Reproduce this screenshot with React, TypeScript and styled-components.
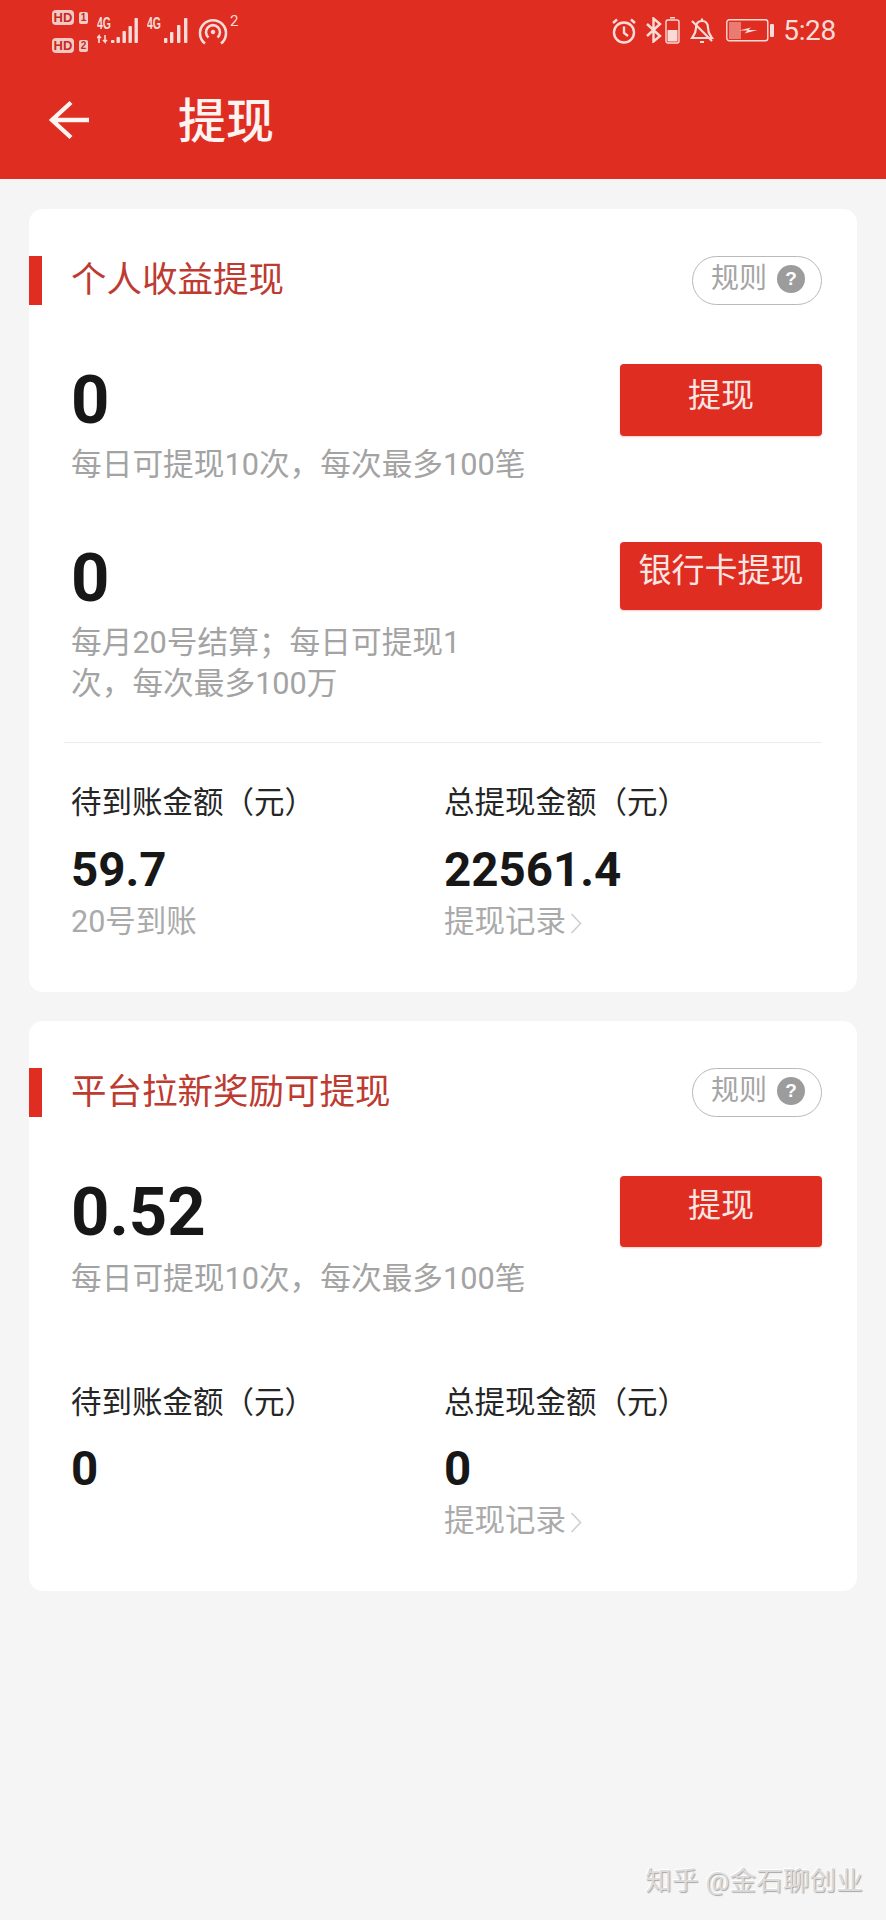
import React from "react";
import styled, { createGlobalStyle } from "styled-components";

const RED = "#e02d21";
const PALE = "#f7dcd8";
const STACK = `Roboto, "Noto Sans CJK SC", sans-serif`;

const Global = createGlobalStyle`
  html, body { margin: 0; padding: 0; background: #f5f5f5; }
  body { font-family: ${STACK}; overflow: hidden; }
  * { box-sizing: border-box; }
`;

const Page = styled.div`
  width: 886px;
  height: 1920px;
  display: flex;
  flex-direction: column;
  background: #f5f5f5;
`;

const Header = styled.header`
  height: 179px;
  background: ${RED};
  color: #fff;
  flex: none;
`;

const StatusBar = styled.div`
  height: 60px;
  padding: 10px 50px 0 52px;
  display: flex;
  justify-content: space-between;
  align-items: flex-start;
  color: ${PALE};
`;

const StatusGroup = styled.div`
  display: flex;
  align-items: flex-start;
`;

const HdStack = styled.div`
  display: flex;
  flex-direction: column;
  gap: 13px;
  margin-right: 9px;
`;

const HdRow = styled.div`
  display: flex;
  align-items: center;
  gap: 5px;
`;

const HdBadge = styled.span`
  width: 22px;
  height: 15px;
  border-radius: 4px;
  background: #f3c9c4;
  color: #c92a20;
  font: 700 13px/15px "Liberation Sans", sans-serif;
  text-align: center;
`;

const HdIndex = styled.span`
  width: 9px;
  height: 12px;
  border-radius: 2px;
  background: #f3c9c4;
  color: #c92a20;
  font: 700 10px/12px "Liberation Sans", sans-serif;
  text-align: center;
`;

const SignalIcon = styled.svg`
  display: block;
  margin: 6px 8px 0 0;
  flex: none;
`;

const HotspotIcon = styled.svg`
  display: block;
  margin: 8px 2px 0 1px;
  flex: none;
`;

const HotspotCount = styled.span`
  font: 400 15px/16px Roboto, sans-serif;
  margin-top: 3px;
`;

const StatusIcon = styled.svg<{ $left?: number; $top?: number }>`
  display: block;
  flex: none;
  margin-left: ${(p) => p.$left ?? 0}px;
  margin-top: ${(p) => p.$top ?? 8}px;
`;

const Clock = styled.span`
  font: 400 28px/32px Roboto, sans-serif;
  margin: 5px 0 0 9px;
  letter-spacing: -0.3px;
`;

const NavBar = styled.div`
  height: 119px;
  padding-left: 48px;
  display: flex;
  align-items: center;
`;

const BackIcon = styled.svg`
  display: block;
  flex: none;
`;

const NavTitle = styled.h1`
  margin: 4px 0 0 88px;
  font: 500 48px/56px ${STACK};
  color: #fdf3f1;
`;

const Card = styled.section<{ $bottom: number }>`
  width: 828px;
  margin: 0 0 29px 29px;
  padding: 47px 0 ${(p) => p.$bottom}px;
  background: #fff;
  border-radius: 14px;
`;

const FirstCardSpacer = styled.div`
  height: 30px;
  flex: none;
`;

const CardHead = styled.div`
  display: flex;
  align-items: center;
  height: 49px;
  padding-right: 35px;
`;

const AccentBar = styled.span`
  width: 13px;
  height: 49px;
  background: ${RED};
  flex: none;
`;

const CardTitle = styled.h2`
  margin: 0 0 0 29px;
  flex: 1;
  font: 400 35.5px/49px ${STACK};
  color: #bd3b31;
`;

const RulePill = styled.button`
  width: 130px;
  height: 49px;
  padding: 0 0 4px 18px;
  display: flex;
  align-items: center;
  gap: 10px;
  background: #fff;
  border: 1.5px solid #b9b9b9;
  border-radius: 25px;
  color: #a5a5a5;
  font: 400 28px/40px ${STACK};
`;

const HelpDot = styled.span`
  width: 28px;
  height: 28px;
  border-radius: 50%;
  background: #9c9c9c;
  color: #fff;
  font: 700 19px/28px "Liberation Sans", sans-serif;
  text-align: center;
`;

const CardBody = styled.div`
  padding: 0 35px 0 42px;
`;

const BalanceRow = styled.div<{ $top: number }>`
  display: flex;
  justify-content: space-between;
  align-items: flex-start;
  margin-top: ${(p) => p.$top}px;
`;

const BalanceAmount = styled.div`
  font: 700 67px/72px Roboto, sans-serif;
  color: #171717;
`;

const BalanceNote = styled.p<{ $width?: number; $top?: number }>`
  margin: ${(p) => p.$top ?? 8}px 0 0;
  max-width: ${(p) => p.$width ?? 520}px;
  font: 400 30.7px/41px ${STACK};
  color: #a3a3a3;
`;

const WithdrawButton = styled.button<{ $height: number; $lift: number }>`
  width: 202px;
  height: ${(p) => p.$height}px;
  padding: 0 0 ${(p) => p.$lift}px;
  flex: none;
  background: ${RED};
  border: none;
  border-radius: 4px;
  box-shadow: 0 1px 2px rgba(224, 45, 33, 0.25);
  color: #fbe6e3;
  font: 400 33px/40px ${STACK};
`;

const Divider = styled.hr`
  margin: 38px 0 0 -7px;
  height: 1px;
  border: none;
  background: #ececec;
`;

const Stats = styled.div<{ $top: number }>`
  display: grid;
  grid-template-columns: 373px 1fr;
  margin-top: ${(p) => p.$top}px;
`;

const Stat = styled.div`
  display: flex;
  flex-direction: column;
`;

const StatLabel = styled.div`
  font: 400 30.5px/40px ${STACK};
  color: #262626;
`;

const StatValue = styled.div<{ $top: number }>`
  margin-top: ${(p) => p.$top}px;
  font: 700 47.5px/56px Roboto, sans-serif;
  color: #171717;
`;

const StatNote = styled.div`
  margin-top: 4px;
  height: 40px;
  display: flex;
  align-items: center;
  font: 400 30.5px/40px ${STACK};
  color: #aaaaaa;
`;

const Chevron = styled.svg`
  display: block;
  margin: 2px 0 0 4px;
`;

const Watermark = styled.div`
  margin: auto 23px 24px auto;
  font: 400 26.5px/30px ${STACK};
  color: #dcdcdc;
  letter-spacing: 0.2px;
  text-shadow: 1px 1px 1px #a8a8a8, -1px -1px 0 #ffffff;
`;

const Signal = ({ bars, arrows }: { bars: [number, number][]; arrows?: boolean }) => (
  <SignalIcon width="42" height="28" viewBox="0 0 42 28" fill="currentColor">
    <text
      x="0"
      y="13"
      fontFamily="Liberation Sans, sans-serif"
      fontWeight="700"
      fontSize="16"
      textLength="14"
      lengthAdjust="spacingAndGlyphs"
    >
      4G
    </text>
    {arrows && (
      <path d="M2 27v-7l-2 2M2 20l2 2M8 19v7l-2-2M8 26l2-2" fill="none" stroke="currentColor" strokeWidth="1.6" />
    )}
    {bars.map(([x, h]) => (
      <rect key={x} x={x} y={27 - h} width="3.4" height={h} rx="0.8" />
    ))}
  </SignalIcon>
);

const RuleButton = () => (
  <RulePill type="button">
    规则
    <HelpDot>?</HelpDot>
  </RulePill>
);

const RecordArrow = () => (
  <Chevron width="12" height="21" viewBox="0 0 12 21" fill="none" stroke="#cfcfcf" strokeWidth="1.6">
    <path d="M1.5 1l9 9.5-9 9.5" />
  </Chevron>
);

export default function App() {
  return (
    <Page>
      <Global />
      <Header>
        <StatusBar>
          <StatusGroup>
            <HdStack>
              <HdRow>
                <HdBadge>HD</HdBadge>
                <HdIndex>1</HdIndex>
              </HdRow>
              <HdRow>
                <HdBadge>HD</HdBadge>
                <HdIndex>2</HdIndex>
              </HdRow>
            </HdStack>
            <Signal arrows bars={[[14, 3], [19.5, 6], [25.5, 12], [31.5, 17], [37.5, 25]]} />
            <Signal bars={[[17, 5], [23, 11], [30, 18], [37, 25]]} />
            <HotspotIcon width="30" height="27" viewBox="0 0 30 27" fill="none" stroke="currentColor" strokeWidth="2.6">
              <path d="M7 25.5A13 13 0 1 1 23 25.5" />
              <path d="M10.5 19.5A7 7 0 1 1 19.5 19.5" />
              <circle cx="15" cy="14" r="1.8" fill="currentColor" strokeWidth="1" />
            </HotspotIcon>
            <HotspotCount>2</HotspotCount>
          </StatusGroup>
          <StatusGroup>
            <StatusIcon width="26" height="26" viewBox="0 0 26 26" fill="none" stroke="currentColor" strokeWidth="2.4">
              <circle cx="13" cy="14.5" r="10" />
              <path d="M13 8.5v6.5l4 3M2 5l4-3.5M24 5l-4-3.5" />
            </StatusIcon>
            <StatusIcon $left={8} $top={7} width="18" height="26" viewBox="0 0 18 26" fill="none" stroke="currentColor" strokeWidth="2.4">
              <path d="M2 7l13 12-6.5 5.5V1.5L15 7 2 19" />
            </StatusIcon>
            <StatusIcon $left={2} $top={7} width="15" height="27" viewBox="0 0 15 27" fill="none">
              <rect x="1" y="3" width="13" height="23" rx="2" stroke="currentColor" strokeWidth="1.4" />
              <rect x="5" y="0" width="5" height="1.5" fill="currentColor" />
              <rect x="2.5" y="13" width="10" height="11.5" fill="currentColor" />
            </StatusIcon>
            <StatusIcon $left={10} $top={8} width="24" height="26" viewBox="0 0 24 26" fill="none" stroke="currentColor" strokeWidth="2.2">
              <path d="M12 3c-4 0-6 3-6 7 0 5-2 7-4 10h20c-2-3-4-5-4-10 0-4-2-7-6-7zM10 24h4M12 0.5v2.5M2 3l20 20" />
            </StatusIcon>
            <StatusIcon $left={12} $top={9} width="48" height="23" viewBox="0 0 48 23" fill="none">
              <rect x="0.8" y="0.8" width="41" height="21" rx="2.5" stroke="currentColor" strokeWidth="1.4" />
              <rect x="3" y="3" width="12" height="17" fill="currentColor" opacity="0.45" />
              <rect x="44" y="5" width="4" height="13" rx="1" fill="currentColor" />
              <path d="M13 11.5l12-3-2.5 2.5h9l-13 3.5 3-3z" fill="currentColor" />
            </StatusIcon>
            <Clock>5:28</Clock>
          </StatusGroup>
        </StatusBar>
        <NavBar>
          <BackIcon width="42" height="40" viewBox="0 0 42 40" fill="none" stroke="#fdf3f1" strokeWidth="4.4">
            <path d="M4 20h37M23 2.5L4 20l19 17.5" />
          </BackIcon>
          <NavTitle>提现</NavTitle>
        </NavBar>
      </Header>

      <FirstCardSpacer />

      <Card $bottom={50}>
        <CardHead>
          <AccentBar />
          <CardTitle>个人收益提现</CardTitle>
          <RuleButton />
        </CardHead>
        <CardBody>
          <BalanceRow $top={59}>
            <div>
              <BalanceAmount>0</BalanceAmount>
              <BalanceNote>每日可提现10次，每次最多100笔</BalanceNote>
            </div>
            <WithdrawButton type="button" $height={72} $lift={8}>提现</WithdrawButton>
          </BalanceRow>
          <BalanceRow $top={57}>
            <div>
              <BalanceAmount>0</BalanceAmount>
              <BalanceNote $width={400}>每月20号结算；每日可提现1次，每次最多100万</BalanceNote>
            </div>
            <WithdrawButton type="button" $height={68} $lift={10}>银行卡提现</WithdrawButton>
          </BalanceRow>
          <Divider />
          <Stats $top={40}>
            <Stat>
              <StatLabel>待到账金额（元）</StatLabel>
              <StatValue $top={19}>59.7</StatValue>
              <StatNote>20号到账</StatNote>
            </Stat>
            <Stat>
              <StatLabel>总提现金额（元）</StatLabel>
              <StatValue $top={19}>22561.4</StatValue>
              <StatNote>
                提现记录
                <RecordArrow />
              </StatNote>
            </Stat>
          </Stats>
        </CardBody>
      </Card>

      <Card $bottom={50}>
        <CardHead>
          <AccentBar />
          <CardTitle>平台拉新奖励可提现</CardTitle>
          <RuleButton />
        </CardHead>
        <CardBody>
          <BalanceRow $top={59}>
            <div>
              <BalanceAmount>0.52</BalanceAmount>
              <BalanceNote $top={10}>每日可提现10次，每次最多100笔</BalanceNote>
            </div>
            <WithdrawButton type="button" $height={71} $lift={12}>提现</WithdrawButton>
          </BalanceRow>
          <Stats $top={84}>
            <Stat>
              <StatLabel>待到账金额（元）</StatLabel>
              <StatValue $top={18}>0</StatValue>
            </Stat>
            <Stat>
              <StatLabel>总提现金额（元）</StatLabel>
              <StatValue $top={18}>0</StatValue>
              <StatNote>
                提现记录
                <RecordArrow />
              </StatNote>
            </Stat>
          </Stats>
        </CardBody>
      </Card>

      <Watermark>知乎 @金石聊创业</Watermark>
    </Page>
  );
}
